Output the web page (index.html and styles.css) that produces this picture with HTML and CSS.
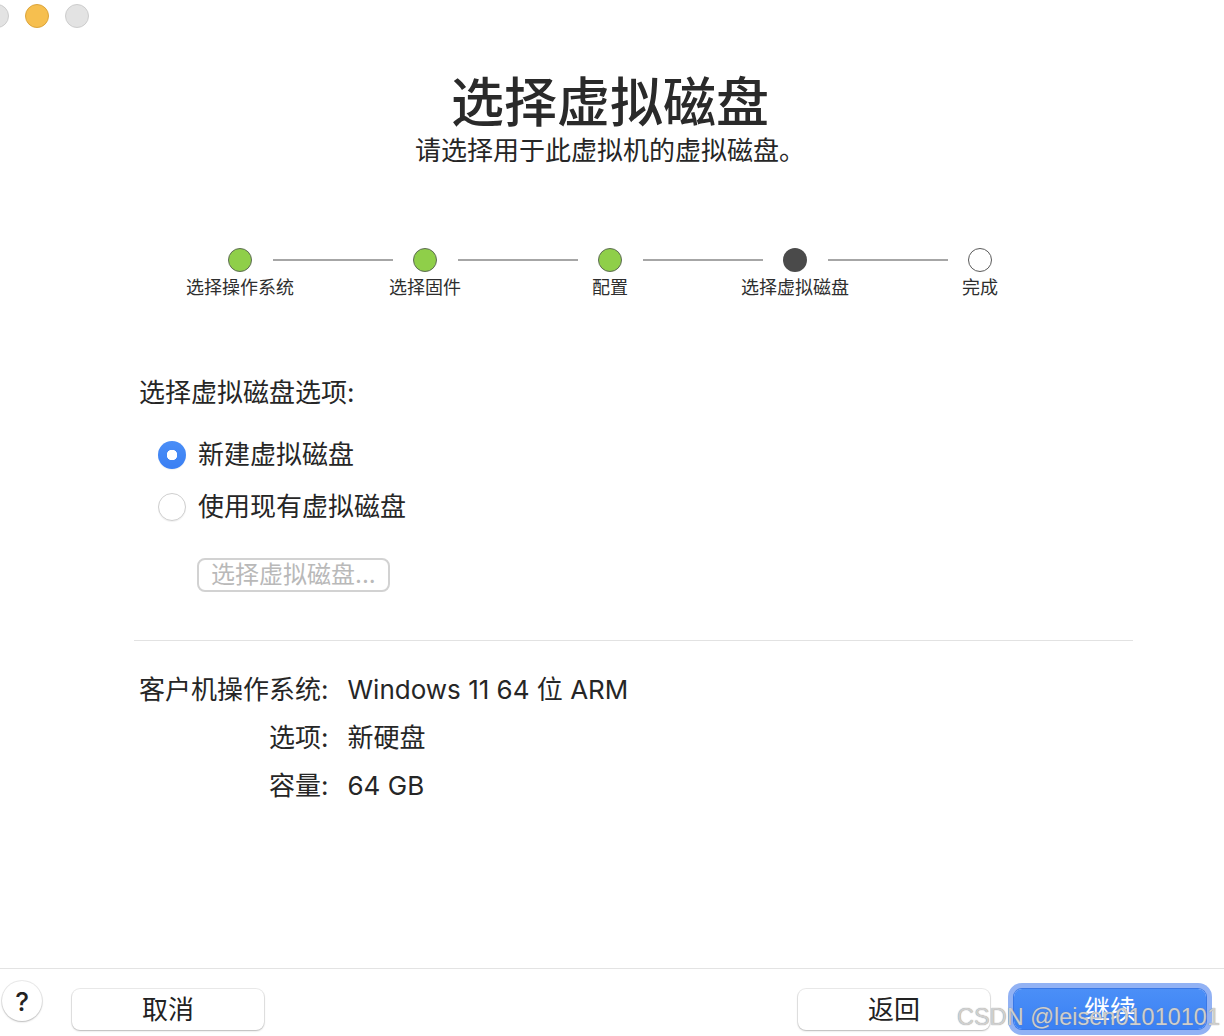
FILE: index.html
```html
<!DOCTYPE html>
<html lang="zh-CN">
<head>
    <meta charset="UTF-8">
    <meta name="viewport" content="width=device-width, initial-scale=1.0">
    <title>选择虚拟磁盘</title>
    <link rel="stylesheet" href="styles.css">
</head>
<body>
    <div class="titlebar">
        <span class="light light-grey"></span>
        <span class="light light-yellow"></span>
        <span class="light light-grey"></span>
    </div>

    <main class="content">
        <h1 class="title">选择虚拟磁盘</h1>
        <p class="subtitle">请选择用于此虚拟机的虚拟磁盘。</p>

        <div class="steps">
            <div class="step">
                <span class="dot dot-done"></span>
                <span class="step-label">选择操作系统</span>
            </div>
            <span class="connector"></span>
            <div class="step">
                <span class="dot dot-done"></span>
                <span class="step-label">选择固件</span>
            </div>
            <span class="connector"></span>
            <div class="step">
                <span class="dot dot-done"></span>
                <span class="step-label">配置</span>
            </div>
            <span class="connector"></span>
            <div class="step">
                <span class="dot dot-current"></span>
                <span class="step-label">选择虚拟磁盘</span>
            </div>
            <span class="connector"></span>
            <div class="step">
                <span class="dot dot-todo"></span>
                <span class="step-label">完成</span>
            </div>
        </div>

        <div class="options">
            <div class="options-title">选择虚拟磁盘选项:</div>
            <label class="radio-row">
                <span class="radio radio-on"></span>
                <span>新建虚拟磁盘</span>
            </label>
            <label class="radio-row">
                <span class="radio"></span>
                <span>使用现有虚拟磁盘</span>
            </label>
            <button class="choose-btn" disabled>选择虚拟磁盘...</button>
        </div>

        <hr class="divider">

        <div class="summary">
            <span class="summary-key">客户机操作系统:</span>
            <span class="summary-val">Windows 11 64 位 ARM</span>
            <span class="summary-key">选项:</span>
            <span class="summary-val">新硬盘</span>
            <span class="summary-key">容量:</span>
            <span class="summary-val">64 GB</span>
        </div>
    </main>

    <footer class="footer">
        <button class="help-btn">?</button>
        <button class="btn btn-cancel">取消</button>
        <div class="spacer"></div>
        <button class="btn">返回</button>
        <button class="btn btn-primary">继续</button>
        <div class="watermark">CSDN @leisen01010101</div>
    </footer>
</body>
</html>
```

FILE: styles.css
```css
* { box-sizing: border-box; }
html, body { margin: 0; }
body {
    width: 1224px;
    height: 1036px;
    overflow: hidden;
    display: flex;
    flex-direction: column;
    background: #fff;
    color: #262626;
    font-family: Inter, "Noto Sans CJK SC", sans-serif;
}

/* window title bar */
.titlebar { height: 32px; display: flex; gap: 16px; padding-top: 4px; margin-left: -15px; }
.light { width: 24px; height: 24px; border-radius: 50%; }
.light-grey { background: #e3e3e3; border: 1px solid #cdcdcd; }
.light-yellow { background: #f6bf4f; border: 1px solid #dca53c; }

.content { flex: 1; display: flex; flex-direction: column; padding-right: 4px; }

.title {
    margin: 41px 0 0;
    font-size: 53px;
    line-height: 60px;
    font-weight: 500;
    text-align: center;
    color: #2a2a2a;
}
.subtitle {
    margin: 1px 0 0;
    font-size: 26px;
    line-height: 34px;
    text-align: center;
}

/* progress steps */
.steps { display: flex; justify-content: center; align-items: flex-start; margin-top: 80px; }
.step { width: 24px; display: flex; flex-direction: column; align-items: center; }
.dot { width: 24px; height: 24px; border-radius: 50%; }
.dot-done { background: #8fcf49; border: 1px solid #5e6b55; }
.dot-current { background: #4a4a4a; }
.dot-todo { background: #fff; border: 1.5px solid #5a5a5a; }
.step-label { margin-top: 4px; font-size: 18px; line-height: 24px; white-space: nowrap; color: #2e2e2e; }
.connector { width: 120px; height: 2px; margin: 11px 20px 0 21px; background: #a6a6a6; }

/* options */
.options { margin-top: 76px; padding-left: 139px; display: flex; flex-direction: column; align-items: flex-start; }
.options-title { font-size: 26px; line-height: 34px; }
.radio-row { display: flex; align-items: center; gap: 12px; margin-left: 19px; font-size: 26px; line-height: 34px; }
.radio-row:first-of-type { margin-top: 28px; }
.radio-row + .radio-row { margin-top: 18px; }
.radio {
    width: 28px;
    height: 28px;
    border-radius: 50%;
    background: #fff;
    border: 1px solid #cfcfcf;
    box-shadow: 0 1px 1px rgba(0, 0, 0, 0.06);
}
.radio-on {
    border: none;
    background: radial-gradient(circle, #fff 0 5px, transparent 5.5px), linear-gradient(#4a8ef7, #3a7ff3);
}
.choose-btn {
    margin: 34px 0 0 58px;
    height: 34px;
    padding: 0 12px;
    font-family: inherit;
    font-size: 24px;
    line-height: 30px;
    color: #b9b9b9;
    background: #fff;
    border: 2px solid #d2d2d2;
    border-radius: 8px;
}

.divider { margin: 48px 87px 0 134px; border: none; border-top: 1px solid #e2e2e2; }

/* summary */
.summary {
    margin: 32px 0 0 139px;
    display: grid;
    grid-template-columns: max-content max-content;
    column-gap: 19px;
    row-gap: 14px;
    font-size: 26px;
    line-height: 34px;
}
.summary-key { justify-self: end; }

/* bottom bar */
.footer {
    position: relative;
    height: 68px;
    border-top: 1px solid #e3e3e3;
    display: flex;
    align-items: flex-start;
    padding: 20px 18px 0 2px;
}
.help-btn {
    width: 40px;
    height: 40px;
    margin-top: -8px;
    border-radius: 50%;
    border: none;
    background: #fff;
    box-shadow: 0 0 0 1px rgba(0, 0, 0, 0.08), 0 1px 2px rgba(0, 0, 0, 0.2);
    font-family: inherit;
    font-size: 26px;
    font-weight: 500;
    color: #222;
    padding: 0;
}
.btn {
    width: 192px;
    height: 41px;
    border: none;
    border-radius: 8px;
    background: #fff;
    box-shadow: 0 0 0 1px rgba(0, 0, 0, 0.08), 0 1px 2px rgba(0, 0, 0, 0.22);
    font-family: inherit;
    font-size: 26px;
    color: #222;
    padding: 0 0 5px;
}
.btn-cancel { margin-left: 30px; }
.spacer { flex: 1; }
.btn-primary {
    margin-left: 24px;
    height: 40px;
    color: #fff;
    background: linear-gradient(#4b8ff7, #3a80f4);
    box-shadow: 0 0 0 1px #3a78e6, 0 0 0 6px #92b2f4;
}
.watermark {
    position: absolute;
    right: 4px;
    top: 34px;
    font-family: "Liberation Sans", Arial, sans-serif;
    font-size: 23.5px;
    line-height: 28px;
    color: rgba(222, 222, 222, 0.85);
    text-shadow: 0 0 1px #7a7a7a;
    pointer-events: none;
}
```
